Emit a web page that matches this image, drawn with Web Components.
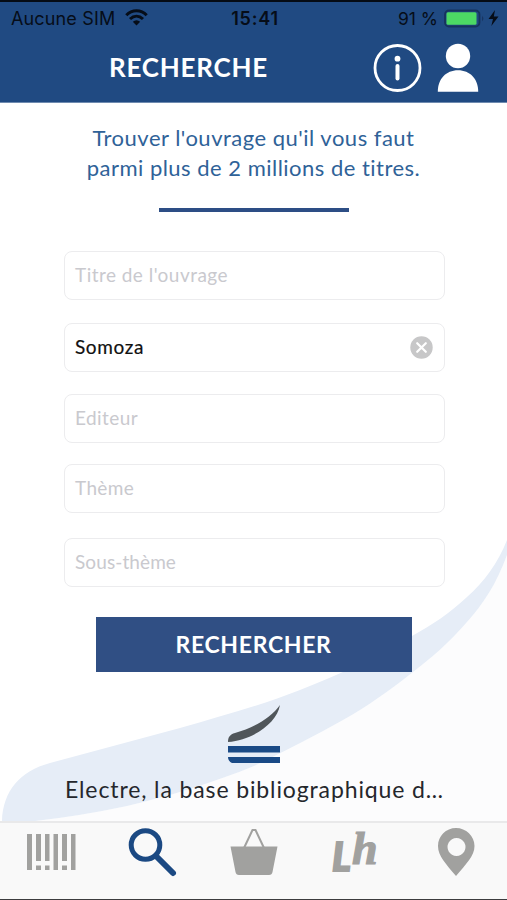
<!DOCTYPE html>
<html lang="fr">
<head>
<meta charset="utf-8">
<title>Recherche</title>
<style>
  body {
    margin: 0;
    width: 507px;
    height: 900px;
    overflow: hidden;
    background: #fff;
    font-family: Lato, "Open Sans", sans-serif;
  }
</style>
</head>
<body>
<search-app>
  <status-bar slot="top" carrier="Aucune SIM" time="15:41" battery="91 %"></status-bar>
  <nav-header slot="top"><fit-text width="159">RECHERCHE</fit-text></nav-header>

  <search-intro>
    <fit-text width="322">Trouver l'ouvrage qu'il vous faut</fit-text>
    <fit-text width="334">parmi plus de 2 millions de titres.</fit-text>
  </search-intro>
  <search-field style="margin-top: 39px"><fit-text width="153">Titre de l'ouvrage</fit-text></search-field>
  <search-field filled style="margin-top: 22px"><fit-text width="69">Somoza</fit-text></search-field>
  <search-field style="margin-top: 21px"><fit-text width="63">Editeur</fit-text></search-field>
  <search-field style="margin-top: 20px"><fit-text width="59">Thème</fit-text></search-field>
  <search-field style="margin-top: 24px"><fit-text width="101">Sous-thème</fit-text></search-field>
  <search-button><fit-text width="156">RECHERCHER</fit-text></search-button>
  <electre-banner><fit-text width="379">Electre, la base bibliographique d…</fit-text></electre-banner>

  <tab-bar slot="bottom"></tab-bar>
</search-app>

<script>
function define(name, html, setup) {
  const template = document.createElement("template");
  template.innerHTML = html;

  customElements.define(name, class extends HTMLElement {
    constructor() {
      super();
      this.attachShadow({ mode: "open" });
      this.shadowRoot.appendChild(template.content.cloneNode(true));
    }

    connectedCallback() {
      if (setup) setup(this, this.shadowRoot);
    }
  });
}

define("search-app", `
  <style>
    :host {
      display: flex;
      flex-direction: column;
      height: 900px;
      box-sizing: border-box;
      border-top: 2px solid #050b14;
      border-bottom: 1px solid #3c3c3e;
    }
    main {
      display: flex;
      flex-direction: column;
      align-items: center;
      flex: 1;
      position: relative;
      padding-left: 2px;
    }
    /* the swoosh lies behind the form */
    .swoosh {
      position: absolute;
      left: 0;
      top: 0;
      z-index: -1;
    }
  </style>
  <slot name="top"></slot>
  <main>
    <svg class="swoosh" width="507" height="718" viewBox="0 103 507 718">
      <path fill="#fcfcfd" d="M507 555C496 585 483 604 467 622C448 644 432 657 413 672C390 690 368 706 343 720C315 736 285 751 254 766C215 782 170 796 127 806Q80 816 35 821H507Z"/>
      <path fill="#e6edf7" d="M507 540C498 563 484 582 467 597C450 613 432 625 412 636C376 658 340 674 300 690C262 705 222 716 180 728L50 763C20 771 3 791 2 821H35Q80 816 127 806C170 796 215 782 254 766C285 751 315 736 343 720C368 706 390 690 413 672C432 657 448 644 467 622C483 604 496 585 507 555Z"/>
    </svg>
    <slot></slot>
  </main>
  <slot name="bottom"></slot>
`);

define("status-bar", `
  <style>
    :host {
      display: grid;
      grid-template-columns: 1fr auto 1fr;
      align-items: center;
      height: 33px;
      padding: 0 8px 0 11px;
      background: #204a82;
      color: #060d18;
      font: 18px/33px Inter, "Liberation Sans", sans-serif;
    }
    div { display: flex; align-items: center; }
    .carrier { letter-spacing: 0.15px; }
    .time { font-weight: 600; font-size: 18px; letter-spacing: 0.8px; }
    .right { justify-content: flex-end; font-size: 17.5px; }
    .wifi { margin: 0 0 2px 10px; }
  </style>
  <div>
    <span class="carrier"></span>
    <svg class="wifi" width="23" height="17" viewBox="0 0 23 17">
      <g fill="none" stroke="#060d18" stroke-width="3">
        <path d="M1.3 6.2C7 .3 16 .3 21.7 6.2"/>
        <path d="M5 10C9 6.3 14 6.3 18 10"/>
      </g>
      <path fill="#060d18" d="M7.8 12.7Q11.5 9.7 15.2 12.7L11.5 16.5Z"/>
    </svg>
  </div>
  <span class="time"></span>
  <div class="right">
    <span class="battery"></span>
    <svg width="55" height="20" viewBox="0 0 55 20" style="margin-left: 6px">
      <rect x="1" y="1.5" width="34.5" height="16" rx="4" fill="none" stroke="#17325d" stroke-width="1.8"/>
      <rect x="2.5" y="3.3" width="30" height="12.4" rx="1.5" fill="#4cd964"/>
      <path d="M38.2 6.7Q40.5 9.5 38.2 12.3Z" fill="#17325d"/>
      <path d="M51 1L44.5 10H49L47.3 17L54.5 7.6H49.8Z" fill="#060d18"/>
    </svg>
  </div>
`, (host, root) => {
  for (const name of ["carrier", "time", "battery"]) {
    root.querySelector("." + name).textContent = host.getAttribute(name);
  }
});

define("nav-header", `
  <style>
    :host {
      display: flex;
      justify-content: space-between;
      height: 67px;
      padding: 0 28px 0 109px;
      background: #204a82;
      border-bottom: 1px solid #6f8bb0;
      color: #fff;
      font-weight: 700;
      font-size: 26px;
      line-height: 65px;
    }
    .actions { display: flex; gap: 14px; padding-top: 8px; }
  </style>
  <slot></slot>
  <div class="actions">
    <svg width="50" height="50" viewBox="0 0 50 50">
      <circle cx="24.5" cy="25" r="22.5" fill="none" stroke="#fff" stroke-width="2.8"/>
      <circle cx="24.5" cy="15.7" r="2.9" fill="#fff"/>
      <path d="M24.5 23V35.5" stroke="#fff" stroke-width="4" stroke-linecap="round"/>
    </svg>
    <svg width="42" height="50" viewBox="0 0 42 50">
      <circle cx="21" cy="13" r="12.2" fill="#fff"/>
      <path fill="#fff" d="M.8 48.7C.8 36 9 27.3 21 27.3S41.2 36 41.2 48.7Z"/>
    </svg>
  </div>
`);

define("search-intro", `
  <style>
    :host {
      display: flex;
      flex-direction: column;
      align-items: center;
      margin-right: 2px;
      padding-top: 20px;
      color: #2f6298;
      font-size: 22px;
      line-height: 30px;
    }
    hr {
      width: 190px;
      height: 4px;
      margin: 25px 0 0;
      border: 0;
      background: #2d4e85;
    }
  </style>
  <slot></slot>
  <hr>
`);

define("search-field", `
  <style>
    :host {
      display: flex;
      align-items: center;
      justify-content: space-between;
      box-sizing: border-box;
      width: 381px;
      height: 49px;
      margin-bottom: 1px;
      padding: 0 11px 2px 10px;
      border: 1.5px solid #ececee;
      border-radius: 8px;
      background: #fff;
      color: #c9c9ce;
      font-size: 19px;
    }
    :host([filled]) { color: #111; -webkit-text-stroke: .2px #111; }
    svg { display: none; }
    :host([filled]) svg { display: block; margin-top: 2px; }
  </style>
  <slot></slot>
  <svg width="23" height="23" viewBox="0 0 23 23">
    <circle cx="11.5" cy="11.5" r="11.2" fill="#c7c7c8"/>
    <path d="M7.2 7.2L15.8 15.8M15.8 7.2L7.2 15.8" stroke="#fff" stroke-width="2.2" stroke-linecap="round"/>
  </svg>
`);

define("search-button", `
  <style>
    :host {
      display: flex;
      justify-content: center;
      width: 316px;
      height: 55px;
      margin: 29px 2px 0 0;
      background: #304f84;
      color: #fff;
      font-weight: 700;
      font-size: 23px;
      line-height: 54px;
    }
  </style>
  <slot></slot>
`);

define("electre-banner", `
  <style>
    :host {
      display: flex;
      flex-direction: column;
      align-items: center;
      color: #25272c;
      font-size: 23px;
      line-height: 30px;
    }
    svg { margin: 32px 0 10px; }
  </style>
  <svg width="54" height="60" viewBox="0 0 54 60">
    <path fill="#50565a" d="M1 38C1 33 3 30.5 8 29C26 24 44 14 53 1C50 19 26 36 1 38Z"/>
    <path fill="#1a4a86" d="M1 42H53V48.5H1ZM1 53H53V59H5Q1 57 1 53Z"/>
  </svg>
  <slot></slot>
`);

define("tab-bar", `
  <style>
    :host {
      display: grid;
      grid-template-columns: repeat(5, 1fr);
      height: 76px;
      border-top: 2px solid #e9e9ea;
      background: #f9f9f9;
    }
    svg { justify-self: center; fill: #a1a19f; }
    text { stroke: #a1a19f; }
    .l { font: italic 900 39px Lato, sans-serif; stroke-width: 1.8px; }
    .h { font: italic 700 46px "Liberation Serif", serif; stroke-width: 1.2px; }
  </style>
  <svg width="60" height="60" viewBox="21 823 60 60">
    <path d="M27 834h5v36h-5ZM36 834h5v27h-5ZM36 865.5h5v4.5h-5ZM45 834h4.5v27h-4.5ZM45 865.5h4.5v4.5h-4.5ZM53.5 834h4.5v36h-4.5ZM62 834h5v27h-5ZM62 865.5h5v4.5h-5ZM71 834h4.5v36h-4.5Z"/>
  </svg>
  <svg width="60" height="60" viewBox="122 823 60 60">
    <circle cx="145.5" cy="845" r="14.3" fill="none" stroke="#1b4983" stroke-width="5"/>
    <path d="M156 856L173 873" stroke="#1b4983" stroke-width="6" stroke-linecap="round"/>
  </svg>
  <svg width="60" height="60" viewBox="223 823 60 60">
    <path d="M230.5 846.5H277.5L272.5 872Q272 875 269 875H239Q236 875 235.5 872Z"/>
    <path d="M244 848L252.5 830H255.5L264 848" fill="none" stroke="#a1a19f" stroke-width="2"/>
  </svg>
  <svg width="60" height="60" viewBox="325 823 60 60">
    <text x="332" y="870.5"><tspan class="l">L</tspan><tspan class="h" dx="1" dy="-6.5">h</tspan></text>
  </svg>
  <svg width="60" height="60" viewBox="426 823 60 60">
    <path fill-rule="evenodd" d="M456 828C466 828 474.5 836 474.5 846C474.5 856 466 864 456 876C446 864 438 856 438 846C438 836 446 828 456 828ZM456.5 838a9 9 0 1 0 .01 0Z"/>
  </svg>
`);

/* spreads the letters of one line over the given width */
define("fit-text", `
  <style>
    :host { display: block; white-space: nowrap; }
    span { display: inline-block; }
  </style>
  <span><slot></slot></span>
`, (host, root) => {
  const span = root.querySelector("span");
  const target = Number(host.getAttribute("width"));
  const count = host.textContent.length;
  const spacing = (target - span.getBoundingClientRect().width) / count;
  span.style.letterSpacing = spacing + "px";
});
</script>
</body>
</html>
